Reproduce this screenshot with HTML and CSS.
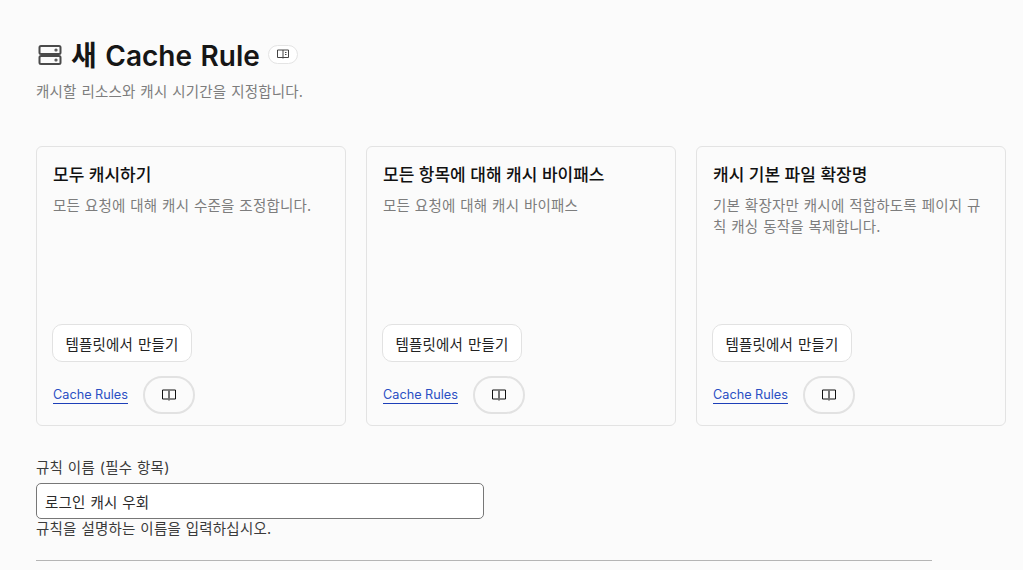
FILE: index.html
```html
<!DOCTYPE html>
<html lang="ko">
<head>
  <meta charset="UTF-8">
  <title>새 Cache Rule</title>
  <link rel="stylesheet" href="styles.css">
</head>
<body>
  <main class="page">
    <header class="page-head">
      <h1 class="title">
        <svg class="title-icon" width="24" height="24" viewBox="0 0 24 24" fill="none" stroke="#4a4a4a" stroke-width="2">
          <rect x="1.500" y="3" width="21" height="8" rx="1.500"/>
          <rect x="1.500" y="13" width="21" height="8" rx="1.500"/>
          <circle cx="18" cy="7" r="0.6"/>
          <circle cx="18" cy="17" r="0.6"/>
        </svg>
        <span>새 Cache Rule</span>
        <a class="doc-pill" href="#">
          <svg width="12" height="10" viewBox="0 0 12 10" fill="none" stroke="#444" stroke-width="1">
            <path d="M.5 1h11v7.500H.5z"/>
            <path d="M6 1v8.500M8 3.500h1.500M8 5.500h1.500"/>
          </svg>
        </a>
      </h1>
      <p class="subtitle">캐시할 리소스와 캐시 시기간을 지정합니다.</p>
    </header>

    <section class="cards">
      <article class="card">
        <h2>모두 캐시하기</h2>
        <p>모든 요청에 대해 캐시 수준을 조정합니다.</p>
        <button class="btn">템플릿에서 만들기</button>
        <div class="card-foot">
          <a class="link" href="#">Cache Rules</a>
          <a class="doc-btn" href="#">
            <svg width="14" height="12" viewBox="0 0 14 12" fill="none" stroke="#111" stroke-width="1">
              <path d="M.5 1h13v9h-13z"/>
              <path d="M7 1v10.500" stroke="#777" stroke-width="2"/>
            </svg>
          </a>
        </div>
      </article>
      <article class="card">
        <h2>모든 항목에 대해 캐시 바이패스</h2>
        <p>모든 요청에 대해 캐시 바이패스</p>
        <button class="btn">템플릿에서 만들기</button>
        <div class="card-foot">
          <a class="link" href="#">Cache Rules</a>
          <a class="doc-btn" href="#">
            <svg width="14" height="12" viewBox="0 0 14 12" fill="none" stroke="#111" stroke-width="1">
              <path d="M.5 1h13v9h-13z"/>
              <path d="M7 1v10.500" stroke="#777" stroke-width="2"/>
            </svg>
          </a>
        </div>
      </article>
      <article class="card">
        <h2>캐시 기본 파일 확장명</h2>
        <p>기본 확장자만 캐시에 적합하도록 페이지 규칙 캐싱 동작을 복제합니다.</p>
        <button class="btn">템플릿에서 만들기</button>
        <div class="card-foot">
          <a class="link" href="#">Cache Rules</a>
          <a class="doc-btn" href="#">
            <svg width="14" height="12" viewBox="0 0 14 12" fill="none" stroke="#111" stroke-width="1">
              <path d="M.5 1h13v9h-13z"/>
              <path d="M7 1v10.500" stroke="#777" stroke-width="2"/>
            </svg>
          </a>
        </div>
      </article>
    </section>

    <form class="rule-form">
      <label for="ruleName">규칙 이름 (필수 항목)</label>
      <input type="text" id="ruleName" value="로그인 캐시 우회">
      <p class="hint">규칙을 설명하는 이름을 입력하십시오.</p>
    </form>
    <hr class="divider">
  </main>
</body>
</html>
```

FILE: styles.css
```css
* {
  margin: 0;
  padding: 0;
  box-sizing: border-box;
}

html, body {
  height: 100%;
  overflow: hidden;
}

body {
  background: #fbfbfb;
  color: #1d1d1d;
  font-family: Inter, "Noto Sans CJK KR", sans-serif;
  font-size: 14.5px;
  letter-spacing: 0.2px;
  word-spacing: 0.5px;
}

.page {
  padding: 33px 17px 0 36px;
}

/* Header */
.title {
  display: flex;
  align-items: center;
  height: 42px;
  font-size: 28px;
  font-weight: 600;
  letter-spacing: 0;
  word-spacing: 1.5px;
  color: #161616;
}

.title-icon {
  margin: 1px 9px 0 2px;
}

.doc-pill {
  display: flex;
  align-items: center;
  justify-content: center;
  width: 30px;
  height: 19px;
  margin-left: 8px;
  background: #fff;
  border: 1px solid #e4e4e4;
  border-radius: 10px;
}

.subtitle {
  margin-top: 7px;
  line-height: 20px;
  color: #7d7d7d;
}

/* Template cards */
.cards {
  display: grid;
  grid-template-columns: repeat(3, 310px);
  column-gap: 20px;
  margin-top: 44px;
}

.card {
  display: flex;
  flex-direction: column;
  align-items: flex-start;
  height: 280px;
  padding: 16px 16px 0;
  border: 1px solid #e3e3e3;
  border-radius: 6px;
}

.card h2 {
  font-size: 17px;
  font-weight: 500;
  line-height: 24px;
  letter-spacing: 0;
  word-spacing: 0;
  color: #111;
}

.card p {
  height: 115px;
  margin-top: 8px;
  line-height: 21px;
  word-break: break-all;
  color: #7d7d7d;
}

.btn {
  width: 140px;
  height: 38px;
  margin-top: 14px;
  margin-left: -1px;
  background: #fff;
  border: 1px solid #e2e2e2;
  border-radius: 10px;
  font: inherit;
  letter-spacing: inherit;
  word-spacing: inherit;
  color: #222;
}

.card-foot {
  display: flex;
  align-items: center;
  gap: 15px;
  margin-top: 14px;
}

.link {
  font-size: 12.7px;
  line-height: 17px;
  letter-spacing: 0;
  word-spacing: 0;
  color: #2a4fc4;
  text-decoration: none;
  border-bottom: 1px solid #1d3fb8;
}

.doc-btn {
  display: flex;
  align-items: center;
  justify-content: center;
  width: 52px;
  height: 38px;
  border: 2px solid #e2e2e2;
  border-radius: 19px;
}

/* Rule form */
.rule-form {
  margin-top: 33px;
}

.rule-form label {
  display: block;
  line-height: 18px;
  color: #3a3a3a;
}

.rule-form input {
  display: block;
  width: 448px;
  height: 36px;
  margin-top: 6px;
  padding: 0 8px;
  background: #fff;
  border: 1px solid #777;
  border-radius: 5px;
  font: inherit;
  letter-spacing: inherit;
  word-spacing: inherit;
  color: #2a2a2a;
}

.hint {
  line-height: 20px;
  color: #3a3a3a;
}

.divider {
  width: 896px;
  margin-top: 21px;
  border: none;
  border-top: 1px solid #b5b5b5;
}
```
